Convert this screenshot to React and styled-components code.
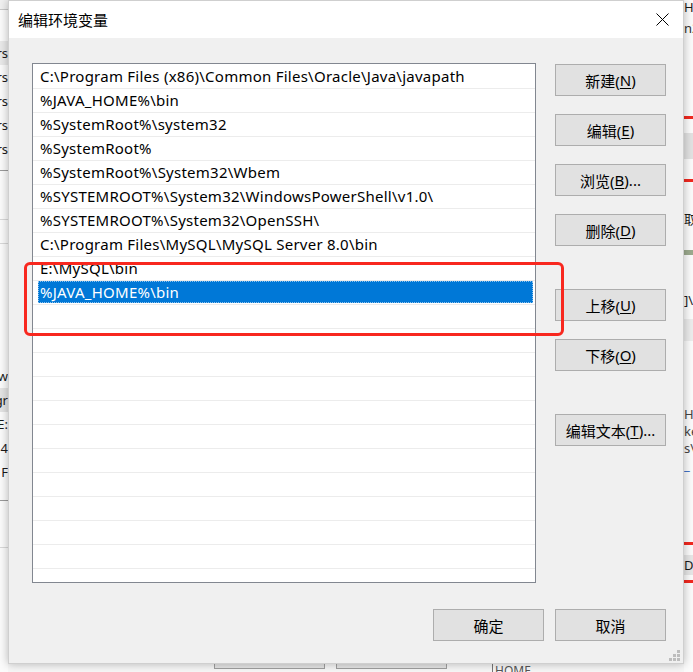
import React from "react";
import styled, { createGlobalStyle } from "styled-components";

const GlobalStyle = createGlobalStyle`
  html, body { margin: 0; padding: 0; background: #f7f7f7; }
  * { box-sizing: border-box; }
`;

const UI_FONT = `"Noto Sans", "Noto Sans CJK SC", sans-serif`;

const paths = [
  "C:\\Program Files (x86)\\Common Files\\Oracle\\Java\\javapath",
  "%JAVA_HOME%\\bin",
  "%SystemRoot%\\system32",
  "%SystemRoot%",
  "%SystemRoot%\\System32\\Wbem",
  "%SYSTEMROOT%\\System32\\WindowsPowerShell\\v1.0\\",
  "%SYSTEMROOT%\\System32\\OpenSSH\\",
  "C:\\Program Files\\MySQL\\MySQL Server 8.0\\bin",
  "E:\\MySQL\\bin",
  "%JAVA_HOME%\\bin",
];
const SELECTED = 9;
const ROW_COUNT = 22;

const Page = styled.div`
  width: 693px;
  height: 672px;
  overflow: hidden;
  display: grid;
  grid-template-columns: 8px 676px 1fr;
  grid-template-rows: 664px 1fr;
  background: #f7f7f7;
  font-family: ${UI_FONT};
`;

/* ---------- the window behind the dialog ---------- */

const Strip = styled.div`
  grid-row: 1 / 3;
  display: flex;
  flex-direction: column;
  overflow: hidden;
  background: #fbfbfb;
`;

const Piece = styled.div`
  height: ${(p) => p.$h}px;
  flex: none;
  display: flex;
  align-items: center;
  justify-content: ${(p) => (p.$start ? "flex-start" : "flex-end")};
  overflow: hidden;
  white-space: nowrap;
  font-size: 13px;
  line-height: 1;
  color: ${(p) => p.$color || "#1a1a1a"};
  background: ${(p) => p.$bg || "transparent"};
  border-bottom: ${(p) => (p.$line ? `1px solid ${p.$line}` : "none")};
`;

const BottomStrip = styled.div`
  grid-column: 2;
  display: flex;
  align-items: flex-start;
  padding-left: 206px;
  gap: 11px;
  overflow: hidden;
`;

const GhostButton = styled.div`
  width: 111px;
  height: 5px;
  border: 1px solid #a0a0a0;
  border-top: none;
  background: #e6e6e6;
`;

const GhostText = styled.div`
  margin-left: 34px;
  margin-top: -2px;
  font-size: 12px;
  color: #555;
  border-left: 1px solid #777;
  padding-left: 2px;
`;

/* ---------- the dialog ---------- */

const Dialog = styled.div`
  grid-column: 2;
  grid-row: 1;
  position: relative;
  z-index: 1;
  display: flex;
  flex-direction: column;
  background: #f0f0f0;
  border: 1px solid #cfcfcf;
  box-shadow: 0 0 9px rgba(0, 0, 0, 0.28);
`;

const TitleBar = styled.div`
  height: 37px;
  flex: none;
  display: flex;
  align-items: center;
  justify-content: space-between;
  padding: 0 14px 0 9px;
  background: #fff;
  font-size: 15px;
  color: #000;
`;

const CloseIcon = styled.svg`
  width: 13px;
  height: 13px;
`;

const Body = styled.div`
  position: relative;
  flex: 1;
  display: flex;
  flex-direction: column;
  padding: 25px 17px 22px 23px;
`;

const Main = styled.div`
  display: flex;
  gap: 19px;
`;

const ListBox = styled.div`
  width: 504px;
  height: 520px;
  background: #fff;
  border: 1px solid #828790;
  padding-top: 1px;
  overflow: hidden;
`;

const Row = styled.div`
  height: 24px;
  padding: 0 2px 1px 5px;
  display: flex;
  border-bottom: 1px solid #ececec;
`;

const Cell = styled.div`
  flex: 1;
  display: flex;
  align-items: center;
  padding-left: 2px;
  font-size: 15px;
  letter-spacing: 0.25px;
  white-space: nowrap;
  color: ${(p) => (p.$selected ? "#fff" : "#000")};
  background: ${(p) => (p.$selected ? "#0078d7" : "transparent")};
  outline: ${(p) => (p.$selected ? "1px dotted rgba(255,255,255,0.55)" : "none")};
  outline-offset: -1px;
`;

const Buttons = styled.div`
  display: flex;
  flex-direction: column;
  padding-top: 1px;
`;

const Button = styled.div`
  width: 111px;
  height: 32px;
  flex: none;
  margin-top: ${(p) => p.$gap || 0}px;
  display: flex;
  align-items: center;
  justify-content: center;
  background: #e1e1e1;
  border: 1px solid #adadad;
  font-size: 15px;
  color: #000;
  u { text-decoration-thickness: 1px; text-underline-offset: 2px; }
`;

const Footer = styled.div`
  display: flex;
  justify-content: flex-end;
  gap: 11px;
  margin-top: 26px;
`;

const Annotation = styled.div`
  position: absolute;
  left: 15px;
  top: 224px;
  width: 540px;
  height: 74px;
  border: 3px solid #f8281f;
  border-radius: 6px;
  pointer-events: none;
`;

const Grip = styled.svg`
  position: absolute;
  right: 3px;
  bottom: 2px;
  width: 11px;
  height: 11px;
`;

function LeftBackdrop() {
  return (
    <Strip>
      <Piece $h={10} $bg="#f1f1f1" $line="#c9c9c9" />
      <Piece $h={31} />
      <Piece $h={24} $bg="#e9e9e9">rs</Piece>
      <Piece $h={24}>rs</Piece>
      <Piece $h={24}>rs</Piece>
      <Piece $h={24}>rs</Piece>
      <Piece $h={24}>rs</Piece>
      <Piece $h={10} $line="#9a9a9a" />
      <Piece $h={49} $line="#d8d8d8" />
      <Piece $h={24} $line="#d8d8d8" />
      <Piece $h={120} />
      <Piece $h={24}>w</Piece>
      <Piece $h={24} $bg="#e4e4e4">gr</Piece>
      <Piece $h={24}>E:</Piece>
      <Piece $h={24}>4</Piece>
      <Piece $h={24}>F</Piece>
      <Piece $h={17} $line="#9a9a9a" />
      <Piece $h={47} $line="#d8d8d8" />
    </Strip>
  );
}

function RightBackdrop() {
  return (
    <Strip>
      <Piece $h={14} $start>Ha</Piece>
      <Piece $h={28} $start $color="#333">n2</Piece>
      <Piece $h={74} />
      <Piece $h={3} $bg="#f0281f" />
      <Piece $h={14} />
      <Piece $h={26} $bg="#e2e2e2" />
      <Piece $h={20} />
      <Piece $h={3} $bg="#f0281f" />
      <Piece $h={28} />
      <Piece $h={18} $start>取</Piece>
      <Piece $h={22} />
      <Piece $h={5} $bg="#9caa8e" />
      <Piece $h={36} />
      <Piece $h={18} $start>]\</Piece>
      <Piece $h={10} />
      <Piece $h={22} $bg="#ececec" />
      <Piece $h={64} />
      <Piece $h={18} $start $color="#444">HC</Piece>
      <Piece $h={17} $start $color="#444">ke</Piece>
      <Piece $h={17} $start $color="#444">s\</Piece>
      <Piece $h={17} $start $color="#1f5fbf">_</Piece>
      <Piece $h={68} />
      <Piece $h={3} $bg="#f0281f" />
      <Piece $h={10} />
      <Piece $h={20} $start $bg="#e6e6e6">Do</Piece>
      <Piece $h={5} />
      <Piece $h={3} $bg="#f0281f" />
    </Strip>
  );
}

export default function App() {
  const rows = Array.from({ length: ROW_COUNT }, (_, i) => paths[i] || "");
  return (
    <>
      <GlobalStyle />
      <Page>
        <LeftBackdrop />
        <Dialog>
          <TitleBar>
            <span>编辑环境变量</span>
            <CloseIcon viewBox="0 0 13 13">
              <path d="M0.5 0.5 L12.5 12.5 M12.5 0.5 L0.5 12.5" stroke="#000" strokeWidth="1" fill="none" />
            </CloseIcon>
          </TitleBar>
          <Body>
            <Main>
              <ListBox>
                {rows.map((text, i) => (
                  <Row key={i}>
                    <Cell $selected={i === SELECTED}>{text}</Cell>
                  </Row>
                ))}
              </ListBox>
              <Buttons>
                <Button>新建(<u>N</u>)</Button>
                <Button $gap={18}>编辑(<u>E</u>)</Button>
                <Button $gap={18}>浏览(<u>B</u>)...</Button>
                <Button $gap={18}>删除(<u>D</u>)</Button>
                <Button $gap={43}>上移(<u>U</u>)</Button>
                <Button $gap={18}>下移(<u>O</u>)</Button>
                <Button $gap={43}>编辑文本(<u>T</u>)...</Button>
              </Buttons>
            </Main>
            <Footer>
              <Button>确定</Button>
              <Button>取消</Button>
            </Footer>
            <Annotation />
            <Grip viewBox="0 0 11 11">
              {[
                [8, 0],
                [4, 4],
                [8, 4],
                [0, 8],
                [4, 8],
                [8, 8],
              ].map(([x, y]) => (
                <rect key={`${x}-${y}`} x={x} y={y} width="3" height="3" fill="#bdbdbd" />
              ))}
            </Grip>
          </Body>
        </Dialog>
        <RightBackdrop />
        <BottomStrip>
          <GhostButton />
          <GhostButton />
          <GhostText>HOME</GhostText>
        </BottomStrip>
      </Page>
    </>
  );
}
